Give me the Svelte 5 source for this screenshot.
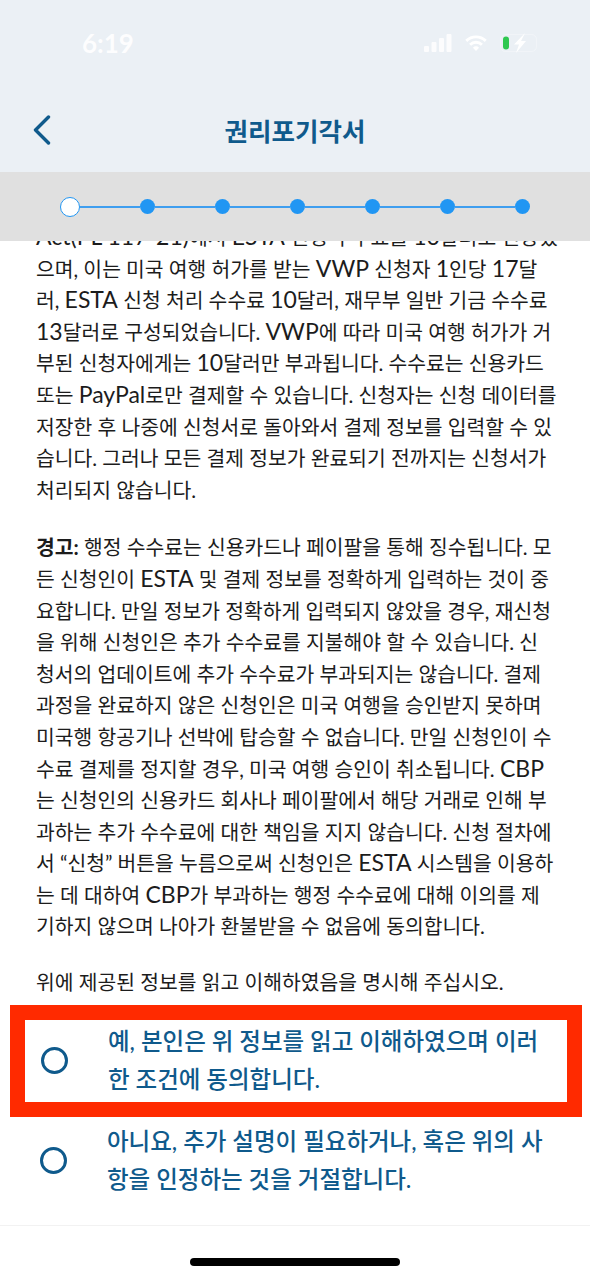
<script lang="ts">
	const firstPara = [
		'Act(PL 117-21)에서 ESTA 신청 수수료를 10달러로 인상했',
		'으며, 이는 미국 여행 허가를 받는 VWP 신청자 1인당 17달',
		'러, ESTA 신청 처리 수수료 10달러, 재무부 일반 기금 수수료',
		'13달러로 구성되었습니다. VWP에 따라 미국 여행 허가가 거',
		'부된 신청자에게는 10달러만 부과됩니다. 수수료는 신용카드',
		'또는 PayPal로만 결제할 수 있습니다. 신청자는 신청 데이터를',
		'저장한 후 나중에 신청서로 돌아와서 결제 정보를 입력할 수 있',
		'습니다. 그러나 모든 결제 정보가 완료되기 전까지는 신청서가',
		'처리되지 않습니다.'
	];
	const warning = [
		' 행정 수수료는 신용카드나 페이팔을 통해 징수됩니다. 모',
		'든 신청인이 ESTA 및 결제 정보를 정확하게 입력하는 것이 중',
		'요합니다. 만일 정보가 정확하게 입력되지 않았을 경우, 재신청',
		'을 위해 신청인은 추가 수수료를 지불해야 할 수 있습니다. 신',
		'청서의 업데이트에 추가 수수료가 부과되지는 않습니다. 결제',
		'과정을 완료하지 않은 신청인은 미국 여행을 승인받지 못하며',
		'미국행 항공기나 선박에 탑승할 수 없습니다. 만일 신청인이 수',
		'수료 결제를 정지할 경우, 미국 여행 승인이 취소됩니다. CBP',
		'는 신청인의 신용카드 회사나 페이팔에서 해당 거래로 인해 부',
		'과하는 추가 수수료에 대한 책임을 지지 않습니다. 신청 절차에',
		'서 “신청” 버튼을 누름으로써 신청인은 ESTA 시스템을 이용하',
		'는 데 대하여 CBP가 부과하는 행정 수수료에 대해 이의를 제',
		'기하지 않으며 나아가 환불받을 수 없음에 동의합니다.'
	];
	const steps = [0, 1, 2, 3, 4, 5, 6];

	// Latin runs are set larger than the Hangul, as in the app's font pairing
	function runs(line: string) {
		return line.split(/([A-Za-z0-9()\-]+)/).filter(Boolean);
	}
	const isLatin = (run: string) => /^[A-Za-z0-9()\-]+$/.test(run);
</script>

<div class="screen">
	<header class="top">
		<div class="status">
			<span class="time">6:19</span>
			<div class="status-icons">
				<svg width="28" height="18" viewBox="0 0 28 18" fill="#fff" opacity="0.85">
					<rect x="0" y="12" width="5" height="6" rx="1" />
					<rect x="7.5" y="8" width="5" height="10" rx="1" />
					<rect x="15" y="4" width="5" height="14" rx="1" />
					<rect x="22.5" y="0" width="5" height="18" rx="1" />
				</svg>
				<svg width="22" height="18" viewBox="0 0 26 20" fill="none" stroke="#fff" stroke-width="3.4">
					<path d="M1.5 7.5a16.5 16.5 0 0 1 23 0" />
					<path d="M6 12a10 10 0 0 1 14 0" />
					<path d="M13 19.5l-3.6-4a5 5 0 0 1 7.2 0z" fill="#fff" stroke="none" />
				</svg>
				<svg width="41" height="20" viewBox="0 0 41 20" fill="none">
					<rect x="0.5" y="1.5" width="36" height="17" rx="5" stroke="#fff" stroke-opacity="0.3" />
					<rect x="3" y="3.5" width="6" height="13" rx="3" fill="#2ec84f" />
					<path d="M25 0L14 11.5h5L16 20l10-12h-5z" fill="#fff" />
				</svg>
			</div>
		</div>
		<nav class="nav">
			<svg class="back" width="18" height="30" viewBox="0 0 18 30" fill="none">
				<path d="M15.5 2L2.5 15l13 13" stroke="#0f5a8c" stroke-width="3.4" stroke-linecap="round" stroke-linejoin="round" />
			</svg>
			<h1>권리포기각서</h1>
		</nav>
	</header>

	<div class="stepper">
		{#each steps as step}
			{#if step > 0}
				<span class="connector"></span>
			{/if}
			<span class="dot" class:current={step === 0}></span>
		{/each}
	</div>

	<main class="content">
		<p class="para first">
			{#each firstPara as line}
				<span class="line">{#each runs(line) as run}<span class:latin={isLatin(run)}>{run}</span>{/each}</span>
			{/each}
		</p>
		<p class="para">
			{#each warning as line, i}
				<span class="line">{#if i === 0}<strong>경고:</strong>{/if}{#each runs(line) as run}<span class:latin={isLatin(run)}>{run}</span>{/each}</span>
			{/each}
		</p>
		<p class="para confirm">
			<span class="line">위에 제공된 정보를 읽고 이해하였음을 명시해 주십시오.</span>
		</p>

		<div class="option highlighted">
			<span class="radio"></span>
			<div class="label">
				<span class="line">예, 본인은 위 정보를 읽고 이해하였으며 이러</span>
				<span class="line">한 조건에 동의합니다.</span>
			</div>
		</div>
		<div class="option">
			<span class="radio"></span>
			<div class="label">
				<span class="line">아니요, 추가 설명이 필요하거나, 혹은 위의 사</span>
				<span class="line">항을 인정하는 것을 거절합니다.</span>
			</div>
		</div>
	</main>

	<footer class="home">
		<span class="indicator"></span>
	</footer>
</div>

<style>
	:global(body) {
		margin: 0;
		background: #fff;
	}

	.screen {
		width: 590px;
		height: 1278px;
		display: flex;
		flex-direction: column;
		overflow: hidden;
		font-family: Lato, 'Noto Sans CJK KR', sans-serif;
	}

	.top {
		height: 172px;
		flex: none;
		background: #ebf0f5;
	}

	.status {
		height: 86px;
		display: flex;
		align-items: center;
		justify-content: space-between;
		padding: 0 49px 0 82px;
	}

	.time {
		color: #fff;
		font-size: 26px;
		font-weight: 700;
		opacity: 0.9;
	}

	.status-icons {
		display: flex;
		align-items: center;
		gap: 13px;
	}

	.nav {
		position: relative;
		height: 86px;
		display: flex;
		align-items: center;
		justify-content: center;
	}

	.back {
		position: absolute;
		left: 33px;
		top: 29px;
	}

	h1 {
		margin: 0;
		font-size: 25.5px;
		font-weight: 700;
		color: #0f5a8c;
	}

	.stepper {
		height: 69px;
		flex: none;
		display: flex;
		align-items: center;
		padding-left: 60px;
		background: #e0e0e0;
		position: relative;
		z-index: 1;
	}

	.dot {
		width: 15px;
		height: 15px;
		flex: none;
		border-radius: 50%;
		background: #2196f3;
	}

	.dot.current {
		width: 18px;
		height: 18px;
		background: #fff;
		border: 1.5px solid #2196f3;
	}

	.connector {
		width: 60px;
		height: 2px;
		flex: none;
		background: #3f9eef;
	}

	.content {
		flex: 1;
		min-height: 0;
		overflow: hidden;
		border-bottom: 1px solid #f2f2f2;
	}

	.para {
		margin: 0 0 24px;
		padding: 0 36px;
		font-size: 20.4px;
		line-height: 31.6px;
		color: #1c1c1c;
	}

	.latin {
		font-size: 23px;
		line-height: 1;
	}

	.para.first {
		margin-top: -19px;
		margin-bottom: 26px;
	}

	.line {
		display: block;
		white-space: nowrap;
	}

	strong {
		font-weight: 700;
	}

	.confirm {
		margin-bottom: 6px;
	}

	.option {
		display: flex;
		align-items: center;
		gap: 40px;
		padding: 0 0 0 40px;
		height: 82px;
	}

	.option.highlighted {
		margin: 0 8px 3px 10px;
		padding: 0 0 0 16px;
		border: 15px solid #ff2a00;
	}

	.radio {
		width: 21px;
		height: 21px;
		flex: none;
		border: 3px solid #0f5a8c;
		border-radius: 50%;
	}

	.label {
		margin-top: -2px;
		font-size: 23.5px;
		line-height: 38px;
		font-weight: 500;
		color: #0f5a8c;
	}

	.home {
		height: 52px;
		flex: none;
		display: flex;
		justify-content: center;
		padding-top: 32px;
		box-sizing: border-box;
	}

	.indicator {
		width: 210px;
		height: 8px;
		border-radius: 4px;
		background: #000;
	}
</style>
